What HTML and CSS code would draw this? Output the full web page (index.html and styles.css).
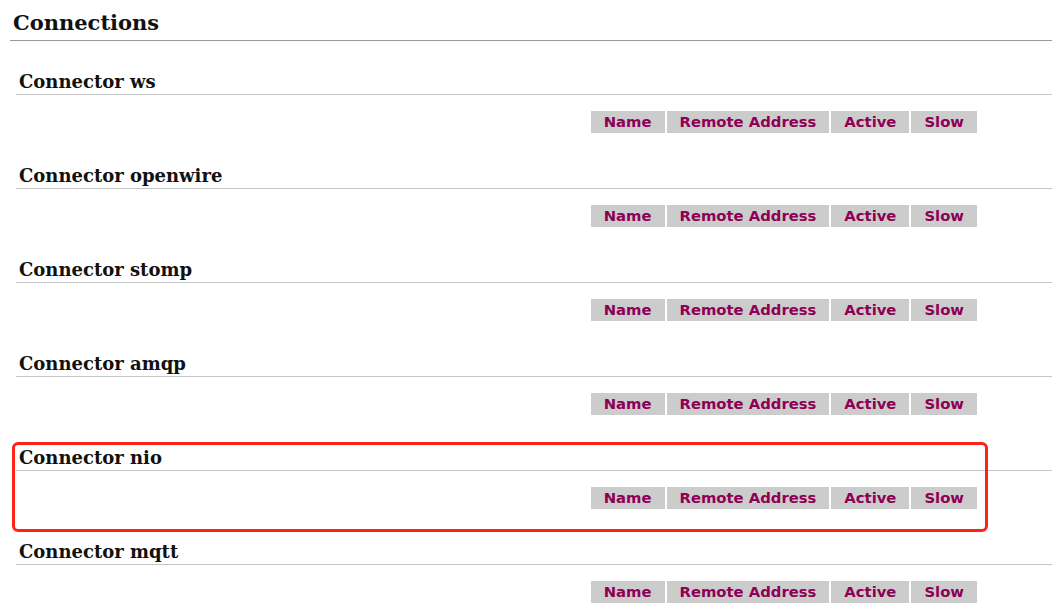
FILE: index.html
```html
<!DOCTYPE html>
<html>
<head>
<meta charset="utf-8">
<link rel="stylesheet" href="styles.css">
</head>
<body>
<div class="page">
  <h2 class="title">Connections</h2>
  <div class="connectors">
    <section class="connector">
      <h3 class="connector-name">Connector ws</h3>
      <div class="cols"><span class="col">Name</span><span class="col">Remote Address</span><span class="col">Active</span><span class="col">Slow</span></div>
    </section>
    <section class="connector">
      <h3 class="connector-name">Connector openwire</h3>
      <div class="cols"><span class="col">Name</span><span class="col">Remote Address</span><span class="col">Active</span><span class="col">Slow</span></div>
    </section>
    <section class="connector">
      <h3 class="connector-name">Connector stomp</h3>
      <div class="cols"><span class="col">Name</span><span class="col">Remote Address</span><span class="col">Active</span><span class="col">Slow</span></div>
    </section>
    <section class="connector">
      <h3 class="connector-name">Connector amqp</h3>
      <div class="cols"><span class="col">Name</span><span class="col">Remote Address</span><span class="col">Active</span><span class="col">Slow</span></div>
    </section>
    <section class="connector">
      <h3 class="connector-name">Connector nio</h3>
      <div class="cols"><span class="col">Name</span><span class="col">Remote Address</span><span class="col">Active</span><span class="col">Slow</span></div>
    </section>
    <section class="connector">
      <h3 class="connector-name">Connector mqtt</h3>
      <div class="cols"><span class="col">Name</span><span class="col">Remote Address</span><span class="col">Active</span><span class="col">Slow</span></div>
    </section>
  </div>
  <div class="highlight"></div>
</div>
</body>
</html>
```
FILE: styles.css
```css
html, body {
  margin: 0;
  padding: 0;
  background: #fff;
}
.page {
  position: relative;
  width: 1052px;
  height: 612px;
  overflow: hidden;
}
.title {
  margin: 0 0 0 10px;
  padding: 10px 0 4px 3px;
  font-family: "DejaVu Serif", "Liberation Serif", serif;
  font-weight: bold;
  font-size: 21px;
  line-height: 26px;
  color: #111;
  border-bottom: 1px solid #999;
}
.connectors {
  margin: 29px 0 0 16px;
}
.connector-name {
  margin: 0;
  padding: 1px 0 1px 3px;
  font-family: "DejaVu Serif", "Liberation Serif", serif;
  font-weight: bold;
  font-size: 18px;
  line-height: 22px;
  color: #111;
  border-bottom: 1px solid #c4c4c4;
}
.cols {
  display: flex;
  justify-content: flex-end;
  gap: 2px;
  margin: 16px 75px 31px 0;
}
.col {
  height: 22px;
  line-height: 22px;
  padding: 0 13px;
  background: #cccccc;
  color: #8e0055;
  font-family: "DejaVu Sans", Verdana, sans-serif;
  font-weight: bold;
  font-size: 14.8px;
}
.highlight {
  position: absolute;
  left: 12px;
  top: 442px;
  width: 970px;
  height: 84px;
  border: 3px solid #fb2418;
  border-radius: 6px;
}
```
